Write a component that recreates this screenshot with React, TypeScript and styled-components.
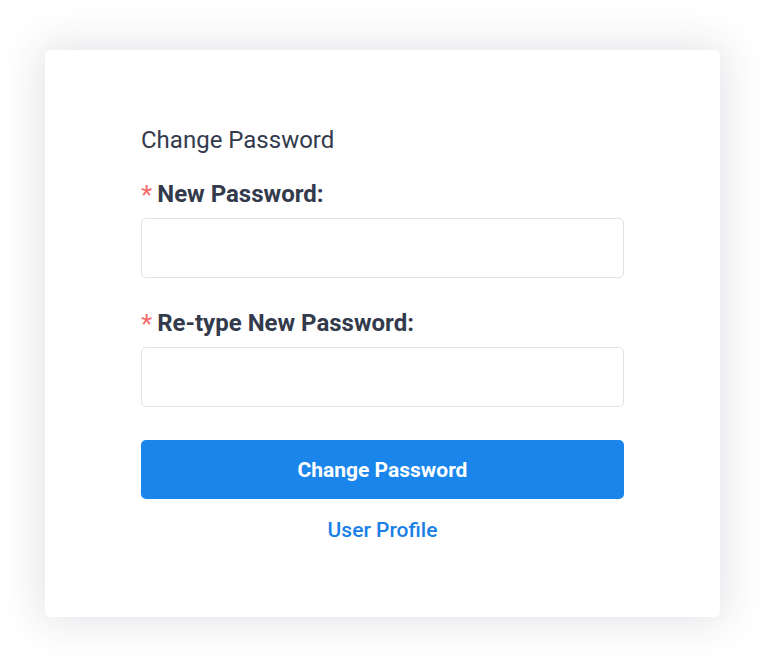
import styled, { createGlobalStyle } from 'styled-components';

const GlobalStyle = createGlobalStyle`
  html, body {
    margin: 0;
    padding: 0;
    background: #ffffff;
    font-family: Roboto, 'Liberation Sans', sans-serif;
  }
`;

const Page = styled.div`
  width: 772px;
  height: 666px;
  box-sizing: border-box;
  padding: 50px 52px 49px 45px;
`;

const Card = styled.div`
  box-sizing: border-box;
  width: 675px;
  height: 567px;
  background: #ffffff;
  border-radius: 5px;
  box-shadow: 0 0 40px 6px rgba(40, 45, 70, 0.12);
  padding: 76px 96px 0 96px;
  display: flex;
  flex-direction: column;
`;

const Title = styled.h2`
  margin: 0 0 26px;
  font-size: 24px;
  font-weight: 400;
  line-height: 28px;
  color: #333a4c;
`;

const Label = styled.label`
  display: flex;
  align-items: baseline;
  gap: 5px;
  height: 28px;
  font-size: 24px;
  font-weight: 700;
  line-height: 28px;
  color: #333a4c;
  margin-bottom: 10px;
`;

const Star = styled.span`
  color: #f56c6c;
  font-size: 26px;
  font-weight: 400;
  line-height: 1;
  transform: translateY(2px);
`;

const Input = styled.input<{ $last?: boolean }>`
  box-sizing: border-box;
  width: 100%;
  height: 60px;
  border: 1px solid #e2e2e8;
  border-radius: 5px;
  background: #fff;
  padding: 0 14px;
  font: inherit;
  font-size: 18px;
  outline: none;
  margin-bottom: ${(p) => (p.$last ? '33px' : '31px')};
`;

const Button = styled.button`
  height: 59px;
  width: 100%;
  border: none;
  border-radius: 5px;
  background: #1a86ec;
  color: #ffffff;
  font-family: Roboto, 'Liberation Sans', sans-serif;
  font-size: 21px;
  font-weight: 700;
  cursor: pointer;
`;

const Link = styled.a`
  align-self: center;
  margin-top: 18px;
  font-size: 21px;
  font-weight: 500;
  line-height: 26px;
  color: #1a80e6;
  text-decoration: none;
`;

export default function App() {
  return (
    <>
      <GlobalStyle />
      <Page>
        <Card>
          <Title>Change Password</Title>
          <Label>
            <Star>*</Star>New Password:
          </Label>
          <Input type="password" />
          <Label>
            <Star>*</Star>Re-type New Password:
          </Label>
          <Input type="password" $last />
          <Button>Change Password</Button>
          <Link href="#">User Profile</Link>
        </Card>
      </Page>
    </>
  );
}
